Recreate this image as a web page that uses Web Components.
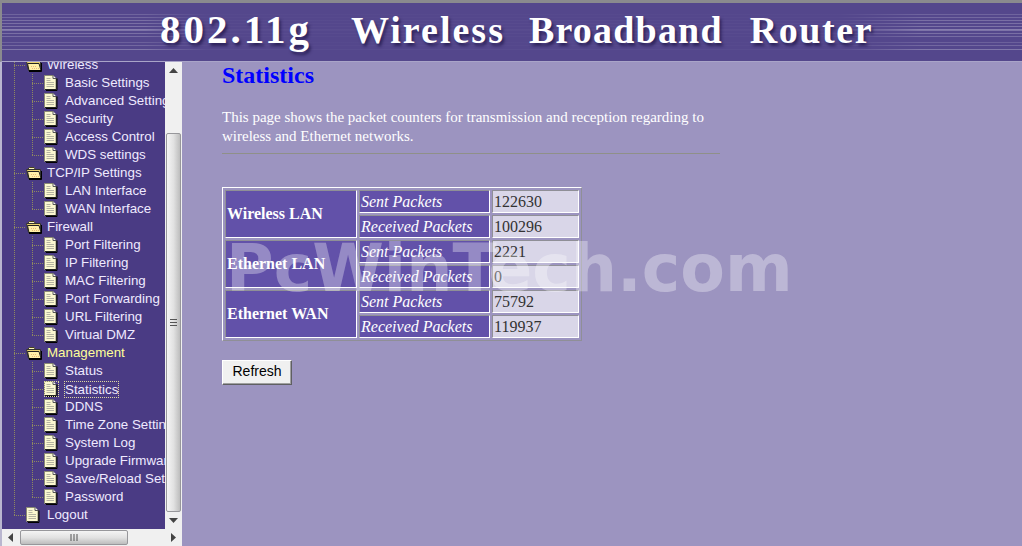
<!DOCTYPE html>
<html><head><meta charset="utf-8"><style>
html,body{margin:0;padding:0;width:1022px;height:546px;overflow:hidden;background:#9c94c0}
</style></head><body>
<router-app>
  <router-banner slot="top"><span>802.11g</span><span>Wireless</span><span>Broadband</span><span>Router</span></router-banner>
  <nav-frame slot="left">
    <tree-row level="0" icon="folder">Wireless</tree-row>
    <tree-row level="1">Basic Settings</tree-row>
    <tree-row level="1">Advanced Settings</tree-row>
    <tree-row level="1">Security</tree-row>
    <tree-row level="1">Access Control</tree-row>
    <tree-row level="1" last>WDS settings</tree-row>
    <tree-row level="0" icon="folder">TCP/IP Settings</tree-row>
    <tree-row level="1">LAN Interface</tree-row>
    <tree-row level="1" last>WAN Interface</tree-row>
    <tree-row level="0" icon="folder">Firewall</tree-row>
    <tree-row level="1">Port Filtering</tree-row>
    <tree-row level="1">IP Filtering</tree-row>
    <tree-row level="1">MAC Filtering</tree-row>
    <tree-row level="1">Port Forwarding</tree-row>
    <tree-row level="1">URL Filtering</tree-row>
    <tree-row level="1" last>Virtual DMZ</tree-row>
    <tree-row level="0" icon="folder" active>Management</tree-row>
    <tree-row level="1">Status</tree-row>
    <tree-row level="1" focus>Statistics</tree-row>
    <tree-row level="1">DDNS</tree-row>
    <tree-row level="1">Time Zone Setting</tree-row>
    <tree-row level="1">System Log</tree-row>
    <tree-row level="1">Upgrade Firmware</tree-row>
    <tree-row level="1">Save/Reload Settings</tree-row>
    <tree-row level="1" last>Password</tree-row>
    <tree-row level="0" end>Logout</tree-row>
  </nav-frame>
  <stats-page slot="main"></stats-page>
  <water-mark slot="main">PcWinTech.com</water-mark>
</router-app>
<script>
customElements.define('router-app',class extends HTMLElement{constructor(){super();this.attachShadow({mode:'open'}).innerHTML=`<style>
:host{display:grid;grid-template-columns:182px 840px;grid-template-rows:62px 484px;width:1022px;height:546px;overflow:hidden;background:#9c94c0;font-family:"Liberation Serif",serif}
.t{grid-column:1/3;display:block;min-width:0}
.l{display:block;min-width:0}
.m{position:relative;display:block;min-width:0;overflow:hidden}
</style><div class="t"><slot name="top"></slot></div><div class="l"><slot name="left"></slot></div><div class="m"><slot name="main"></slot></div>`}});

const ys=[[14,.16],[17,.18],[20,.22],[23,.22],[26,.24],[29,.3],[30,.24],[33,.22],[36,.2],[42,.14],[45,.18],[49,.26]];
customElements.define('router-banner',class extends HTMLElement{constructor(){super();this.attachShadow({mode:'open'}).innerHTML=`<style>
:host{display:flex;box-sizing:border-box;height:62px;border-top:3px solid #8a8a8e;border-left:2px solid #8a8a8e;border-bottom:1px solid #a9a4c8;background:#54478c;position:relative;overflow:hidden;padding:4px 0 0 158px}
svg.s{position:absolute;left:0;top:0}
.x{position:relative;display:flex;align-items:baseline;height:44px;font:bold 38px/44px "Liberation Serif",serif;color:#fff;white-space:pre;text-shadow:2px 3px 3px rgba(20,12,60,.6)}
::slotted(span:nth-child(1)){font-size:41px;letter-spacing:3px;margin-right:39px}
::slotted(span:nth-child(2)){letter-spacing:2px;margin-right:24px}
::slotted(span:nth-child(3)){letter-spacing:1.2px;margin-right:27px}
::slotted(span:nth-child(4)){letter-spacing:1.55px}
</style><svg class="s" width="1020" height="58"><defs><linearGradient id="g" x1="0" x2="1020" y1="0" y2="0" gradientUnits="userSpaceOnUse"><stop offset="0" stop-color="#fff"/><stop offset=".14" stop-color="#fff"/><stop offset=".2" stop-color="#fff" stop-opacity=".1"/><stop offset=".82" stop-color="#fff" stop-opacity=".1"/><stop offset=".9" stop-color="#fff"/><stop offset="1" stop-color="#fff"/></linearGradient></defs>${ys.map(([y,o])=>`<rect x="0" y="${y-3}" width="1020" height="1" fill="url(#g)" opacity="${o}"/>`).join('')}</svg><div class="x"><slot></slot></div>`}});

customElements.define('nav-frame',class extends HTMLElement{constructor(){super();this.attachShadow({mode:'open'}).innerHTML=`<style>
:host{display:grid;box-sizing:border-box;height:484px;grid-template-columns:163px 17px;grid-template-rows:467px 17px;border-left:2px solid #b9b6cf;background:#f0f0f0;font:13.33px/18px "Liberation Sans",Arial,sans-serif}
.v{background:#4a3b84;overflow:hidden;min-width:0}
.in{margin-top:-6px;display:block}
.track{background:#f0f0f0;display:flex;flex-direction:column;align-items:center}
.a{height:17px;flex:none;display:flex;align-items:center;justify-content:center}
.thumb{box-sizing:border-box;width:15px;height:379px;margin-top:54px;border:1px solid #97979b;border-radius:2px;background:linear-gradient(to right,#f4f4f4,#e2e2e2 50%,#bdbdbd);display:flex;align-items:center;justify-content:center}
.sp{flex:1}
.h{background:#f0f0f0;grid-column:1/3;display:flex;align-items:center}
.hthumb{box-sizing:border-box;width:108px;height:15px;margin-left:1px;border:1px solid #97979b;border-radius:2px;background:linear-gradient(to bottom,#f4f4f4,#e2e2e2 50%,#bdbdbd);display:flex;align-items:center;justify-content:center}
svg{display:block}
</style>
<div class="v"><div class="in"><slot></slot></div></div>
<div class="track"><div class="a"><svg width="9" height="5"><path d="M4.500 0 9 5H0z" fill="#444"/></svg></div>
<div class="thumb"><svg width="9" height="7"><path d="M1 .5h7M1 3.500h7M1 6.500h7" stroke="#555" fill="none"/></svg></div><div class="sp"></div>
<div class="a"><svg width="9" height="5"><path d="M0 0H9L4.500 5z" fill="#444"/></svg></div></div>
<div class="h"><div class="a" style="width:17px;height:17px"><svg width="5" height="9"><path d="M5 0V9L0 4.500z" fill="#444"/></svg></div>
<div class="hthumb"><svg width="8" height="9"><path d="M1 1v7M4 1v7M7 1v7" stroke="#555" fill="none"/></svg></div><div class="sp"></div>
<div class="a" style="width:17px;height:17px"><svg width="5" height="9"><path d="M0 0V9L5 4.500z" fill="#444"/></svg></div></div>`}});

const PAGE=`<svg width="14" height="16" viewBox="0 0 14 16"><path d="M.5 .5H9L12 3.500V14.500H.5z" fill="#fbf8d0" stroke="#8a8a74"/><path d="M13 3.500V15.500H2" stroke="#000" fill="none"/><path d="M12 14.500H1" stroke="#222"/><path d="M12.500 3.500V14.500" stroke="#222"/><path d="M9 .5V3.500H12" fill="#fff" stroke="#555"/><path d="M2.500 3.500H6.500M2.500 5.500H6.500M2.500 7.500H10M2.500 9.500H10M2.500 11.500H10" stroke="#b5b4a2"/></svg>`;
const FOLDER=`<svg width="16" height="14" viewBox="0 0 16 14"><path d="M1.500 3.500 3.500 1.500H8L9.500 3.500z" fill="#fdf6c0" stroke="#4a4420"/><path d="M.5 3.500H14.500V12.500H2.500z" fill="#e8d070" stroke="#333"/><path d="M1.500 5.500H13L15 12.500H3z" fill="#fff0a8" stroke="#222"/><path d="M5 8.500h6M6 10.500h7" stroke="#e8b878" stroke-dasharray="1 1"/><path d="M15.500 5V13.500H3" stroke="#000" fill="none"/><path d="M3 12.500H15" stroke="#000"/></svg>`;
const dot='#8f8a60';
customElements.define('tree-row',class extends HTMLElement{constructor(){super();this.attachShadow({mode:'open'})}connectedCallback(){
 const lv=+this.getAttribute('level'),folder=this.getAttribute('icon')==='folder',last=this.hasAttribute('last'),end=this.hasAttribute('end'),act=this.hasAttribute('active'),foc=this.hasAttribute('focus');
 const lines=[];
 const V=(x,y1,y2)=>lines.push(`<path d="M${x}.5 ${y1}V${y2}" stroke="${dot}" stroke-dasharray="1 1"/>`);
 const H=(x1,x2,y)=>lines.push(`<path d="M${x1} ${y}.5H${x2}" stroke="${dot}" stroke-dasharray="1 1"/>`);
 if(lv===0){V(12,0,end?9:18);H(12,24,9)}
 else{V(12,0,18);V(30,0,last?9:18);H(30,42,9)}
 const indent=lv===0?24:42;
 this.shadowRoot.innerHTML=`<style>
 :host{display:block;height:18px;overflow:hidden}
 .r{display:flex;height:18px;position:relative;white-space:nowrap;padding-left:${indent}px;align-items:center}
 .lines{position:absolute;left:0;top:0}
 .ic{position:relative;flex:none;width:${foc?15:21}px;display:flex;align-items:center;height:16px;${foc?'margin-right:6px;':''}}
 .tx{position:relative;color:${act?'#ffff99':'#efeaff'};${foc?'line-height:15px;':''}}
 .ic.foc{outline:1px dotted #ddd8a0;outline-offset:-1px}.tx.foc{outline:1px dotted #ddd8a0}
 </style><div class="r"><svg class="lines" width="60" height="18">${lines.join('')}</svg><span class="ic ${foc?'foc':''}">${folder?FOLDER:PAGE}</span><span class="tx ${foc?'foc':''}"><slot></slot></span></div>`;
}});

customElements.define('stats-page',class extends HTMLElement{constructor(){super();
 const groups=[['Wireless LAN',122630,100296],['Ethernet LAN',2221,0],['Ethernet WAN',75792,119937]];
 const rows=groups.map(g=>`<tr><td class="g" rowspan="2">${g[0]}</td><td class="k">Sent Packets</td><td class="v">${g[1]}</td></tr><tr><td class="k">Received Packets</td><td class="v">${g[2]}</td></tr>`).join('');
 this.attachShadow({mode:'open'}).innerHTML=`<style>
:host{display:block;box-sizing:border-box;height:484px;padding:0 0 0 40px;font:16px/19px "Liberation Serif",serif;color:#fff}
h2{margin:0;font:bold 24px/27px "Liberation Serif",serif;color:#00f}
p{margin:19px 0 0;width:498px;height:38px;font-size:15px}
.hr{width:498px;height:1px;background:#8f9088;margin:7px 0 0}
table{margin-top:33px;border-collapse:separate;border-spacing:2px;border:1px solid;border-color:#fff #8f8f96 #8f8f96 #fff;box-sizing:border-box;width:360px;table-layout:fixed}
td{box-sizing:border-box;height:23px;padding:0 1px;border:1px solid;border-color:#8f8f96 #fff #fff #8f8f96;white-space:nowrap;line-height:19px}
.g{background:#6251a9;font-weight:bold;color:#fff;padding-bottom:2px}
.k{background:#6251a9;font-style:italic;color:#fff}
.v{background:#d9d6e8;color:#333}
button{display:block;box-sizing:border-box;margin-top:19px;width:70px;height:25px;padding:0 0 3px;background:#f0f0f0;border:1px solid;border-color:#fff #5f5f62 #5f5f62 #fff;box-shadow:inset -1px -1px 0 #a0a0a0;font:14px "Liberation Sans",Arial,sans-serif;color:#000}
</style><h2>Statistics</h2><p>This page shows the packet counters for transmission and reception regarding to wireless and Ethernet networks.</p><div class="hr"></div>
<table><colgroup><col style="width:132px"><col style="width:131px"><col></colgroup>${rows}</table>
<button>Refresh</button>`}});

customElements.define('water-mark',class extends HTMLElement{constructor(){super();this.attachShadow({mode:'open'}).innerHTML=`<style>
:host{position:absolute;left:44px;top:162px;font:bold 65px/90px "DejaVu Sans",sans-serif;color:rgba(255,255,255,.33);white-space:nowrap;pointer-events:none}
</style><slot></slot>`}});
</script>
</body></html>
